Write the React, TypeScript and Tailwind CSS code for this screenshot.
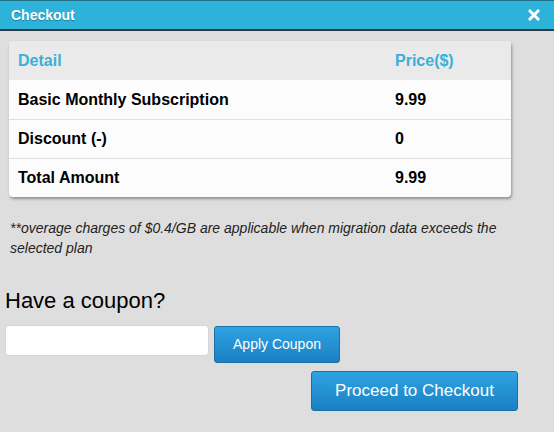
import React from "react";

export default function App() {
  const rows = [
    ["Basic Monthly Subscription", "9.99"],
    ["Discount (-)", "0"],
    ["Total Amount", "9.99"],
  ];
  return (
    <div className="w-[554px] h-[432px] bg-[#dfdede] overflow-hidden" style={{ fontFamily: "'Liberation Sans', Arial, sans-serif" }}>
      <div className="h-[31px] bg-[#2db3da] border-t border-t-[#1d6f86] border-b-2 border-b-[#2a3a40] flex items-center justify-between pl-[11px] pr-[14px]">
        <span className="text-white font-bold text-[14px] [text-shadow:0_1px_1px_rgba(0,0,0,0.3)]">Checkout</span>
        <svg width="12" height="12" viewBox="0 0 12 12">
          <path d="M2 2 L10 10 M10 2 L2 10" stroke="white" strokeWidth="3" strokeLinecap="square" />
        </svg>
      </div>
      <div className="pl-[9px] pr-[43px] pt-[10px]">
        <div className="bg-[#fdfcfd] rounded-[4px] shadow-[1px_2px_3px_rgba(0,0,0,0.35)] overflow-hidden">
          <div className="h-[39px] bg-[#ebeaeb] flex items-center text-[#3aafd8] font-bold text-[16px]">
            <div className="w-[386px] pl-[9px]">Detail</div>
            <div>Price($)</div>
          </div>
          {rows.map(([a, b], i) => (
            <div key={i} className={`h-[39px] flex items-center text-black font-bold text-[16px] ${i > 0 ? "border-t border-[#e0dfe0]" : ""}`}>
              <div className="w-[386px] pl-[9px]">{a}</div>
              <div>{b}</div>
            </div>
          ))}
        </div>
      </div>
      <p className="mt-[21px] pl-[10px] pr-[40px] italic text-[14px] leading-[20px] text-[#222]">
        **overage charges of $0.4/GB are applicable when migration data exceeds the selected plan
      </p>
      <div className="mt-[30px] pl-[5px] text-[22px] text-black leading-[26px]">Have a coupon?</div>
      <div className="mt-[11px] pl-[5px] flex items-start gap-[5px]">
        <input className="w-[204px] h-[31px] bg-white rounded-[4px] border border-[#d6d6d6] outline-none" />
        <button className="mt-[1px] w-[126px] h-[37px] rounded-[3px] bg-gradient-to-b from-[#2ea3e3] to-[#1b80c2] border border-[#1a6fa8] text-white text-[14px]">
          Apply Coupon
        </button>
      </div>
      <div className="mt-[8px] pl-[311px]">
        <button className="w-[207px] h-[40px] rounded-[3px] bg-gradient-to-b from-[#2ea3e3] to-[#1b80c2] border border-[#1a6fa8] text-white text-[17px]">
          Proceed to Checkout
        </button>
      </div>
    </div>
  );
}
